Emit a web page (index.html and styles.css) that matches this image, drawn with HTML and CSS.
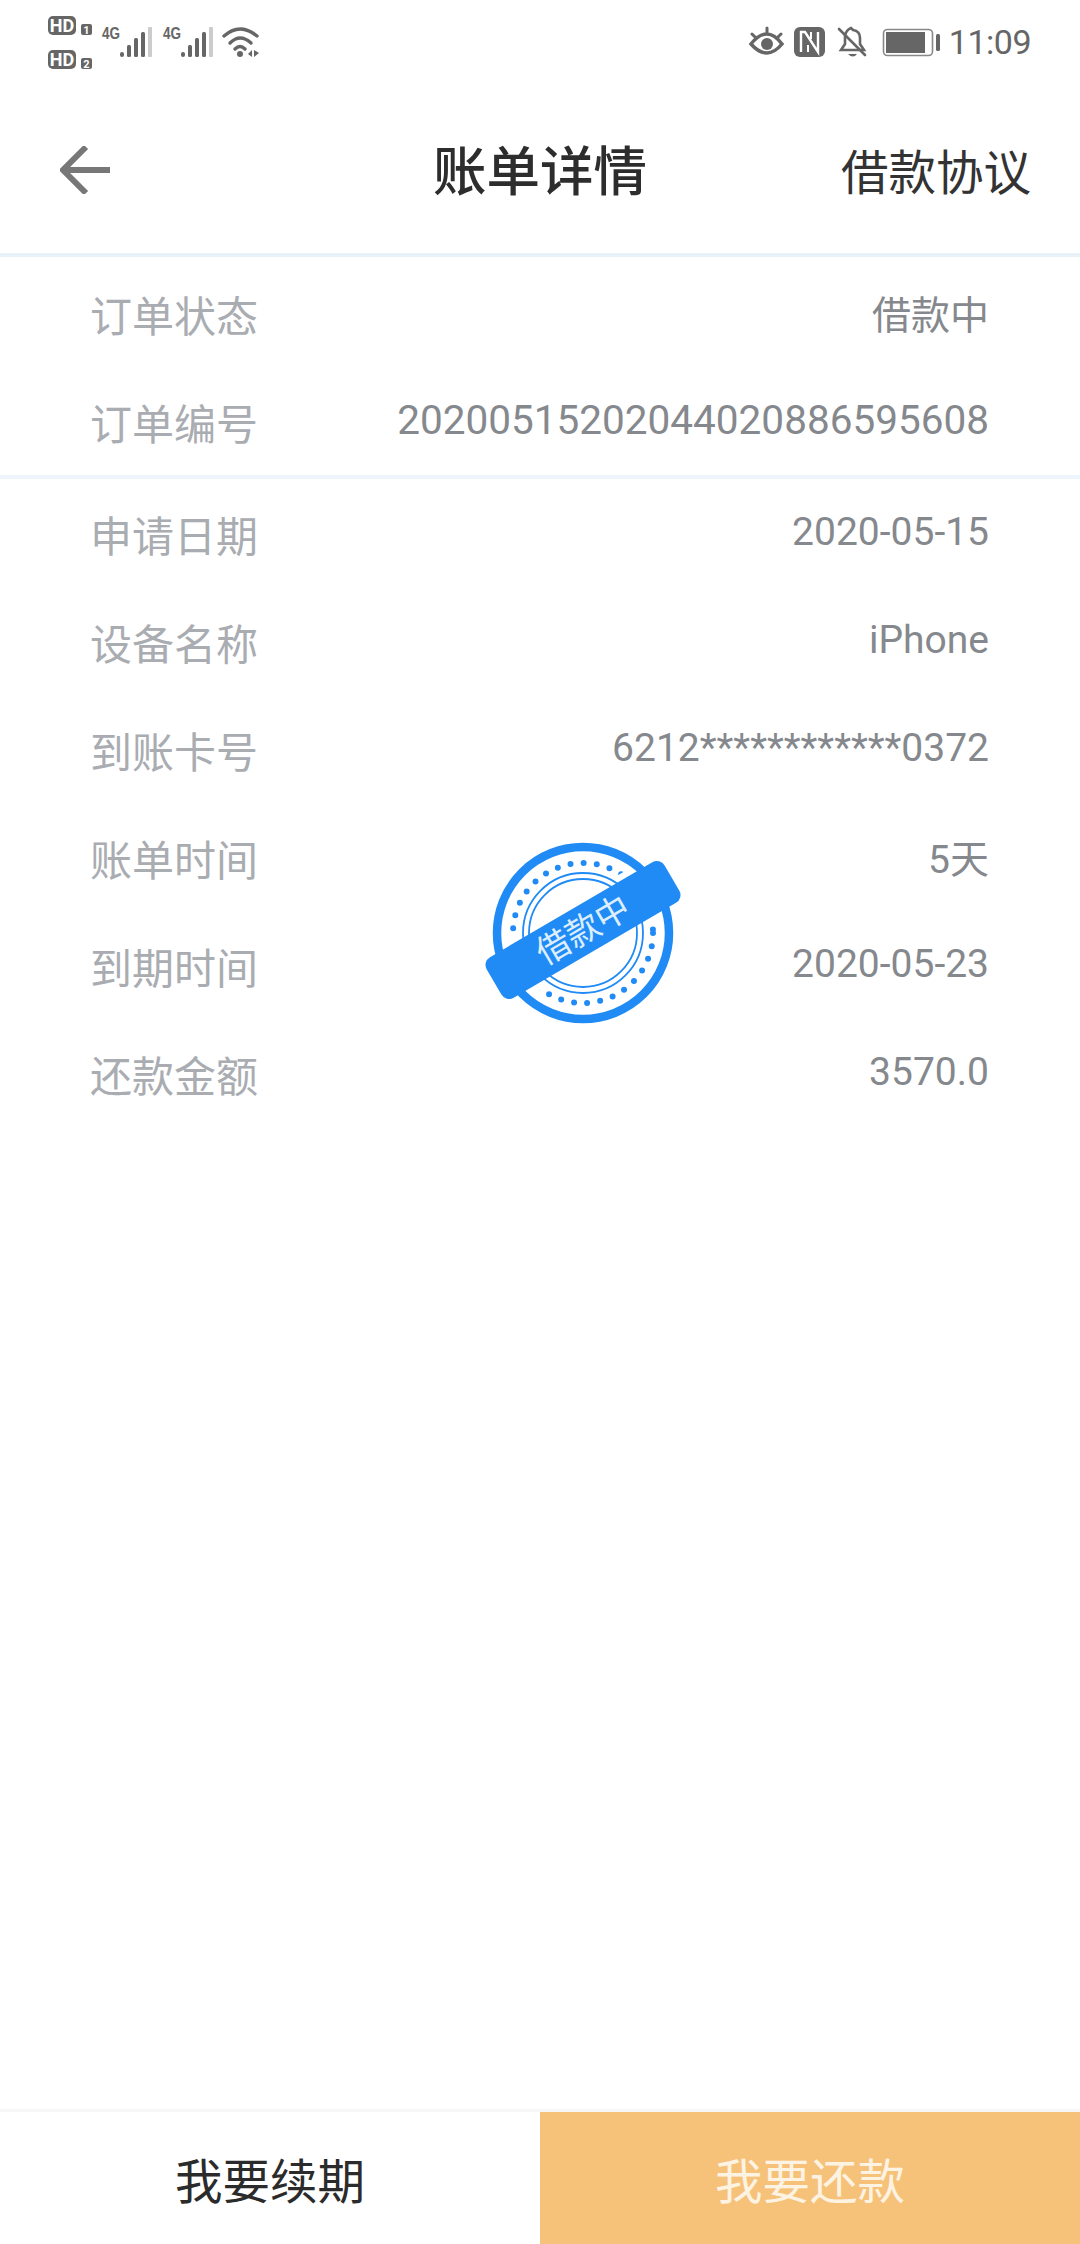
FILE: index.html
```html
<!DOCTYPE html>
<html lang="zh-CN">
<head>
    <meta charset="UTF-8">
    <meta name="viewport" content="width=device-width, initial-scale=1.0">
    <title>账单详情</title>
    <link rel="stylesheet" href="styles.css">
</head>
<body>
    <div class="page">
        <div class="status-bar">
            <svg class="status-left" width="270" height="72" viewBox="0 0 270 72">
                <rect x="48" y="16" width="28" height="19" rx="5" fill="#666"/>
                <text x="62" y="32" class="sb-hd">HD</text>
                <rect x="81" y="24" width="11" height="11" rx="2" fill="#666"/>
                <text x="86.5" y="34" class="sb-num">1</text>
                <rect x="48" y="50" width="28" height="19" rx="5" fill="#666"/>
                <text x="62" y="66" class="sb-hd">HD</text>
                <rect x="81" y="58" width="11" height="11" rx="2" fill="#666"/>
                <text x="86.5" y="68" class="sb-num">2</text>

                <text x="102" y="39" class="sb-4g" textLength="18" lengthAdjust="spacingAndGlyphs">4G</text>
                <g fill="#666">
                    <rect x="120" y="52" width="4" height="5" rx="2"/>
                    <rect x="127" y="45" width="4" height="12" rx="1.5"/>
                    <rect x="134" y="38" width="4" height="19" rx="1.5"/>
                    <rect x="141" y="32" width="4" height="25" rx="1.5"/>
                </g>
                <rect x="148" y="27" width="4" height="30" rx="1" fill="#ccc"/>

                <text x="163" y="39" class="sb-4g" textLength="18" lengthAdjust="spacingAndGlyphs">4G</text>
                <g fill="#666">
                    <rect x="181" y="52" width="4" height="5" rx="2"/>
                    <rect x="188" y="45" width="4" height="12" rx="1.5"/>
                    <rect x="195" y="38" width="4" height="19" rx="1.5"/>
                    <rect x="202" y="32" width="4" height="25" rx="1.5"/>
                </g>
                <rect x="209" y="27" width="4" height="30" rx="1" fill="#ccc"/>

                <g fill="none" stroke="#666" stroke-width="3.4" stroke-linecap="round">
                    <path d="M224 36 Q240 22 257 36"/>
                    <path d="M230 43 Q240 33 251 43"/>
                    <path d="M235 49 Q240 44 245 49"/>
                </g>
                <circle cx="240" cy="54" r="3" fill="#666"/>
                <path d="M252 50 L252 57 L248 54 Z M254 50 L254 57 L259 53 Z" fill="#666"/>
            </svg>
            <div class="status-right">
                <svg width="200" height="72" viewBox="745 0 200 72">
                    <g fill="none" stroke="#666" stroke-linecap="round">
                        <path d="M751 44 Q767 24 782 44 Q767 62 751 44 Z" stroke-width="3.5"/>
                        <path d="M752 34 L755 37 M767 28 L767 32 M781 34 L778 37" stroke-width="3"/>
                    </g>
                    <circle cx="767" cy="44" r="6" fill="#666"/>

                    <rect x="794" y="27" width="31" height="30" rx="6" fill="#666"/>
                    <path d="M801 52 V32 H805 L818 52 V32" fill="none" stroke="#fff" stroke-width="2.4"/>
                    <path d="M808 45 V52 M811 32 V39" fill="none" stroke="#fff" stroke-width="2"/>

                    <g fill="none" stroke="#666" stroke-width="2.6" stroke-linecap="round">
                        <path d="M841 50 H864 L860 44 V38 Q860 31 853 30 L851 28 Q846 30 845 36 V44 Z"/>
                        <path d="M839 29 L865 55"/>
                    </g>
                    <path d="M848 54 H857 Q853 59 848 54 Z" fill="#666"/>

                    <rect x="883.5" y="29.5" width="49" height="26" rx="4" fill="none" stroke="#888" stroke-width="1.6"/>
                    <rect x="886" y="32" width="39" height="21" fill="#666"/>
                    <rect x="936" y="34" width="4" height="17" rx="1.5" fill="#666"/>
                </svg>
                <span class="clock">11:09</span>
            </div>
        </div>

        <header class="nav-bar">
            <svg class="back-icon" width="52" height="48" viewBox="0 0 52 48">
                <path d="M4 24 H50 M26 1 L3 24 L26 47" fill="none" stroke="#777" stroke-width="6"/>
            </svg>
            <h1 class="nav-title">账单详情</h1>
            <a class="nav-link">借款协议</a>
        </header>

        <section class="info-group">
            <div class="row"><span class="row-label">订单状态</span><span class="row-value">借款中</span></div>
            <div class="row"><span class="row-label">订单编号</span><span class="row-value row-value-long">20200515202044020886595608</span></div>
        </section>

        <section class="info-group info-group-detail">
            <div class="row"><span class="row-label">申请日期</span><span class="row-value">2020-05-15</span></div>
            <div class="row"><span class="row-label">设备名称</span><span class="row-value">iPhone</span></div>
            <div class="row"><span class="row-label">到账卡号</span><span class="row-value">6212************0372</span></div>
            <div class="row"><span class="row-label">账单时间</span><span class="row-value">5天</span></div>
            <div class="row"><span class="row-label">到期时间</span><span class="row-value">2020-05-23</span></div>
            <div class="row"><span class="row-label">还款金额</span><span class="row-value">3570.0</span></div>

            <svg class="stamp" width="220" height="220" viewBox="0 0 220 220">
                <circle cx="113" cy="112" r="70" fill="none" stroke="#208bf5" stroke-width="6" stroke-linecap="round" stroke-dasharray="0 13.2"/>
                <rect x="13" y="79" width="200" height="60" fill="#fff" transform="rotate(-30 113 109)"/>
                <circle cx="113" cy="112" r="86" fill="none" stroke="#208bf5" stroke-width="8.5"/>
                <circle cx="113" cy="112" r="60" fill="none" stroke="#208bf5" stroke-width="1.8"/>
                <circle cx="113" cy="112" r="54" fill="none" stroke="#208bf5" stroke-width="1.8"/>
                <g transform="rotate(-30.3 113 109)">
                    <rect x="10" y="85.5" width="206" height="47" rx="9" fill="#208bf5"/>
                    <text x="113" y="121" class="stamp-text">借款中</text>
                </g>
            </svg>
        </section>

        <footer class="action-bar">
            <button class="action-btn">我要续期</button>
            <button class="action-btn action-btn-primary">我要还款</button>
        </footer>
    </div>
</body>
</html>
```

FILE: styles.css
```css
* {
    box-sizing: border-box;
}
body {
    margin: 0;
    background-color: #fff;
    font-family: Roboto, "Noto Sans CJK SC", sans-serif;
}
.page {
    display: flex;
    flex-direction: column;
    height: 2244px;
}
.status-bar {
    display: flex;
    justify-content: space-between;
    height: 72px;
    padding-right: 49px;
}
.status-left {
    display: block;
}
.status-right {
    display: flex;
    align-items: center;
    gap: 4px;
}
.clock {
    font-size: 34px;
    letter-spacing: -0.5px;
    color: #666;
    padding-top: 12px;
}
.sb-hd {
    font: 700 18px Roboto, sans-serif;
    fill: #fff;
    text-anchor: middle;
}
.sb-num {
    font: 700 11px Roboto, sans-serif;
    fill: #fff;
    text-anchor: middle;
}
.sb-4g {
    font: 700 16px "Liberation Sans", sans-serif;
    fill: #666;
}
.nav-bar {
    display: flex;
    align-items: center;
    justify-content: space-between;
    height: 185px;
    padding: 14px 49px 0 60px;
    border-bottom: 4px solid #e9f1f9;
    position: relative;
}
.nav-title {
    position: absolute;
    left: 433px;
    top: 65px;
    margin: 0;
    font-size: 53.5px;
    line-height: 72px;
    font-weight: 500;
    color: #2d2d2d;
}
.nav-link {
    font-size: 47.5px;
    color: #333;
}
.info-group {
    padding-top: 2px;
}
.info-group + .info-group {
    border-top: 4px solid #edf4fc;
    padding-top: 0;
}
.info-group-detail {
    position: relative;
}
.row {
    display: flex;
    align-items: center;
    justify-content: space-between;
    height: 108px;
    padding: 0 91px 0 90px;
}
.row-label {
    font-size: 42px;
    color: #a9acb1;
}
.row-value {
    font-size: 39px;
    color: #85888d;
    padding-bottom: 3px;
}
.row-value-long {
    font-size: 40.5px;
}
.stamp {
    position: absolute;
    left: 470px;
    top: 342px;
}
.stamp-text {
    font: 34px "Noto Sans CJK SC", sans-serif;
    fill: #dceeff;
    text-anchor: middle;
}
.action-bar {
    display: flex;
    margin-top: auto;
    height: 135px;
    border-top: 3px solid #f7f7f7;
}
.action-btn {
    flex: 1;
    border: none;
    background-color: #fff;
    font-family: inherit;
    font-size: 47.5px;
    color: #2b2b2b;
    padding: 0;
}
.action-btn-primary {
    background-color: #f6c27a;
    color: #fdf3e3;
}
```
